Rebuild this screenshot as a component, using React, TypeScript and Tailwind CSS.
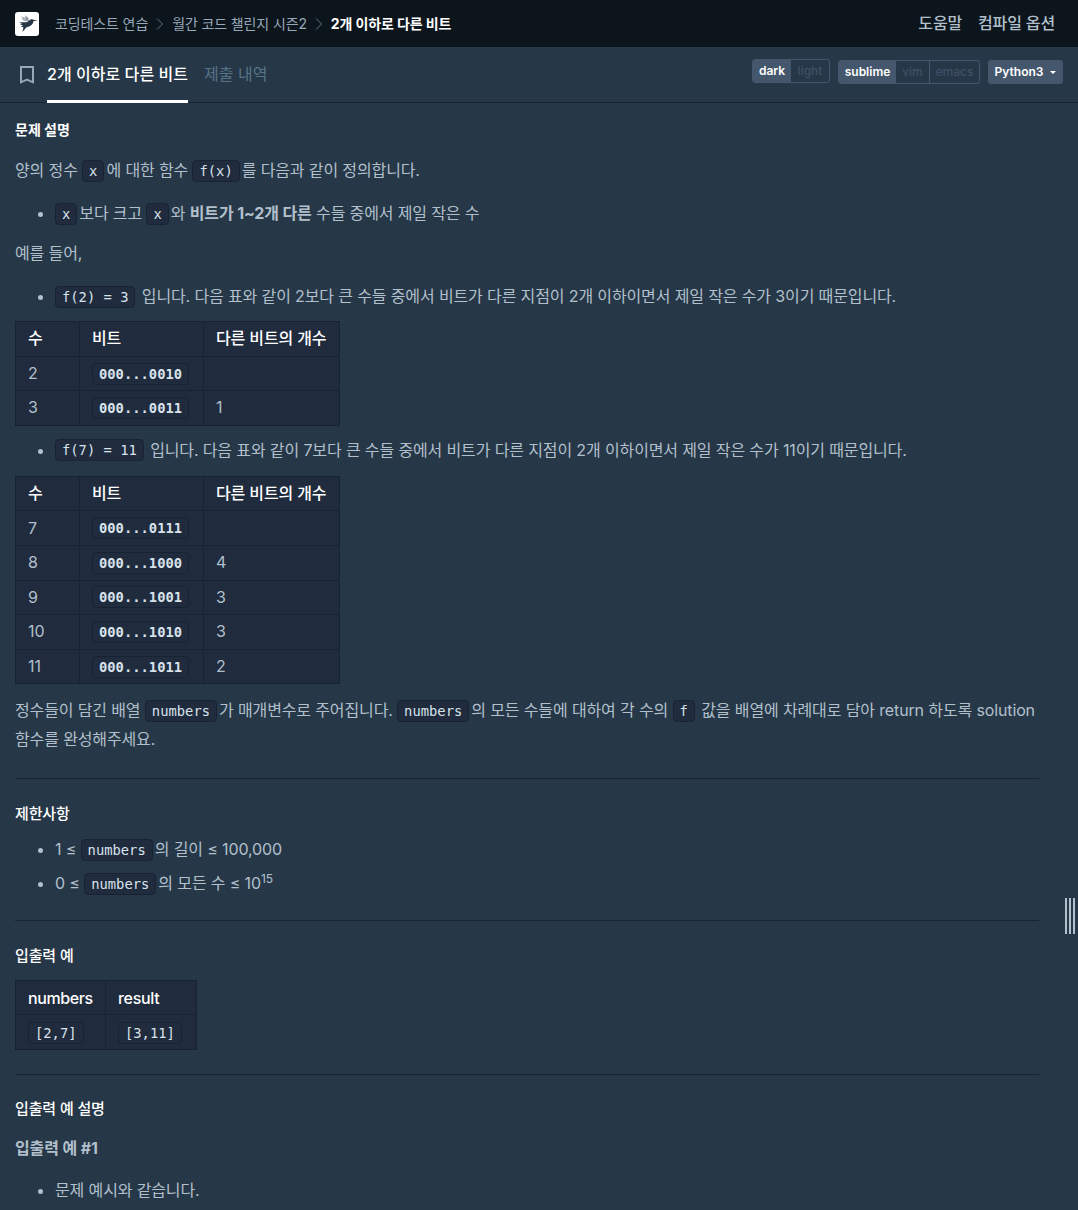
import React from 'react'

const Code = ({ children, className = '' }: { children: React.ReactNode; className?: string }) => (
  <code className={`relative -top-px mr-[2px] inline-block h-[22px] rounded-[4px] border border-[#172334] bg-[#202b3d] px-1.5 align-middle font-['DejaVu_Sans_Mono','Noto_Sans_CJK_KR',monospace] text-[13.8px] leading-[20px] tracking-normal whitespace-pre text-[#d7e2eb] ${className}`}>
    {children}
  </code>
)

const Item = ({ children, className }: { children: React.ReactNode; className: string }) => (
  <ul className={`list-disc pl-10 leading-7 ${className}`}>
    <li>{children}</li>
  </ul>
)

const Heading = ({ children, className }: { children: React.ReactNode; className: string }) => (
  <h6 className={`leading-7 text-white ${className}`}>{children}</h6>
)

const BitTable = ({ rows, className }: { rows: string[][]; className: string }) => (
  <table className={`w-[325px] table-fixed border-collapse bg-[#202b3d] text-left whitespace-nowrap ${className}`}>
    <colgroup>
      <col className="w-16" />
      <col className="w-[124px]" />
      <col />
    </colgroup>
    <thead>
      <tr className="h-[34.6px] text-white">
        {['수', '비트', '다른 비트의 개수'].map((label) => (
          <th key={label} className="border border-[#172334] px-3 pt-0 pb-0.5 leading-7 font-medium">{label}</th>
        ))}
      </tr>
    </thead>
    <tbody>
      {rows.map(([num, bits, diff]) => (
        <tr key={num} className="h-[34.6px]">
          <td className="border border-[#172334] px-3 pt-0 pb-px leading-7">{num}</td>
          <td className="border border-[#172334] px-3 pt-0 pb-px leading-7"><Code className="font-bold">{bits}</Code></td>
          <td className="border border-[#172334] px-3 pt-0 pb-px leading-7">{diff}</td>
        </tr>
      ))}
    </tbody>
  </table>
)

const Chevron = () => (
  <svg className="mx-2 h-3 w-2" viewBox="0 0 8 12" fill="none" stroke="#577487">
    <path d="M1 0.5L6.5 6L1 11.5" />
  </svg>
)

export default function App() {
  return (
    <div className="relative h-[1210px] w-[1078px] overflow-hidden bg-[#263747] font-['Inter','Noto_Sans_CJK_KR',sans-serif] text-base text-[#b2c0cc]">
      <header className="flex h-[47px] items-center bg-[#0c151c] pr-[23px] pl-[15px]">
        <svg className="mr-4 h-6 w-6" viewBox="0 0 24 24">
          <rect width="24" height="24" rx="3" fill="#fff" />
          <path d="M6.3 4.5L10 5.5L13 10L8 8.5Z" fill="#a9b0b9" />
          <path d="M10.2 3L13.3 6L14 9.5L11 8Z" fill="#8b949f" />
          <path d="M4 10.2L12 10.2L15.5 7.6C16.5 6.9 18 7 18.6 7.8L23 8.4L18.6 8.9C18 12.5 15 14.5 11.5 15.2L7.5 20L8.4 15.2L5.8 14.4L8 13.4L5 12.2L7 11.8Z" fill="#263747" />
        </svg>
        <nav className="flex flex-1 items-center text-sm tracking-[-0.12px] text-[#98a8b9]">
          <a>코딩테스트 연습</a>
          <Chevron />
          <a>월간 코드 챌린지 시즌2</a>
          <Chevron />
          <a className="font-bold text-white">2개 이하로 다른 비트</a>
        </nav>
        <div className="relative -top-px flex gap-4 font-medium tracking-[-0.15px]">
          <a>도움말</a>
          <a>컴파일 옵션</a>
        </div>
      </header>

      <div className="flex h-14 border-b border-[#172334] pr-[15px] pl-5">
        <svg className="mt-[19px] mr-[13px] h-[18px] w-3.5" viewBox="0 0 14 18" fill="none" stroke="#98a8b9" strokeWidth="2">
          <path d="M1 1H13V16.3L7 13.7L1 16.3Z" />
        </svg>
        <div className="h-14 w-[141px] border-b-3 border-white leading-[54px] font-medium tracking-[0.05px] whitespace-nowrap text-white">2개 이하로 다른 비트</div>
        <div className="ml-4 flex-1 leading-[54px] text-[#577487]">제출 내역</div>
        <div className="mt-3 flex h-6 overflow-hidden rounded-[3px] border border-[#44576c] text-xs leading-[22px] font-medium text-[#3f5166]">
          <span className="w-[38px] bg-[#44576c] text-center font-semibold text-white">dark</span>
          <span className="w-[38px] text-center">light</span>
        </div>
        <div className="mt-[13px] ml-2 flex h-6 overflow-hidden rounded-[3px] border border-[#44576c] text-xs leading-[22px] font-medium text-[#3f5166]">
          <span className="w-[57px] bg-[#44576c] text-center font-semibold text-white">sublime</span>
          <span className="w-[34px] border-r border-[#44576c] text-center">vim</span>
          <span className="w-[49px] text-center">emacs</span>
        </div>
        <button className="mt-[13px] ml-2 flex h-6 w-[75px] items-center justify-center gap-[7px] rounded-[3px] bg-[#44576c] text-xs font-semibold text-white">
          Python3
          <svg className="h-[3px] w-1.5" viewBox="0 0 6 3" fill="#fff"><path d="M0 0H6L3 3Z" /></svg>
        </button>
      </div>

      <main className="flow-root w-[1054px] px-[15px] tracking-[-0.13px]">
        <Heading className="mt-[13px] text-sm font-bold tracking-normal">문제 설명</Heading>
        <p className="mt-3 h-7 leading-7">양의 정수 <Code>x</Code>에 대한 함수 <Code>f(x)</Code>를 다음과 같이 정의합니다.</p>
        <Item className="mt-[15px] h-7"><Code>x</Code>보다 크고 <Code>x</Code>와 <strong>비트가 1~2개 다른</strong> 수들 중에서 제일 작은 수</Item>
        <p className="mt-3 h-7 leading-7">예를 들어,</p>
        <Item className="mt-[15px] h-7"><Code>f(2) = 3</Code> 입니다. 다음 표와 같이 2보다 큰 수들 중에서 비트가 다른 지점이 2개 이하이면서 제일 작은 수가 3이기 때문입니다.</Item>
        <BitTable className="mt-[11px]" rows={[['2', '000...0010', ''], ['3', '000...0011', '1']]} />
        <Item className="mt-2.5 h-7"><Code>f(7) = 11</Code> 입니다. 다음 표와 같이 7보다 큰 수들 중에서 비트가 다른 지점이 2개 이하이면서 제일 작은 수가 11이기 때문입니다.</Item>
        <BitTable
          className="mt-3"
          rows={[
            ['7', '000...0111', ''],
            ['8', '000...1000', '4'],
            ['9', '000...1001', '3'],
            ['10', '000...1010', '3'],
            ['11', '000...1011', '2'],
          ]}
        />
        <p className="mt-3 h-[58px] leading-[29px]">정수들이 담긴 배열 <Code>numbers</Code>가 매개변수로 주어집니다. <Code>numbers</Code>의 모든 수들에 대하여 각 수의 <Code>f</Code> 값을 배열에 차례대로 담아 return 하도록 solution 함수를 완성해주세요.</p>
        <hr className="mt-6 border-[#172334]" />
        <Heading className="mt-[21px] text-[15px] font-medium">제한사항</Heading>
        <Item className="mt-[7px] h-7">1 ≤ <Code>numbers</Code>의 길이 ≤ 100,000</Item>
        <Item className="mt-1.5 h-7">0 ≤ <Code>numbers</Code>의 모든 수 ≤ 10<sup className="text-xs">15</sup></Item>
        <hr className="mt-[23px] border-[#172334]" />
        <Heading className="mt-[21px] text-[15px] font-medium">입출력 예</Heading>
        <table className="mt-2.5 w-[182px] table-fixed border-collapse bg-[#202b3d] text-left">
          <thead>
            <tr className="h-[34px] text-white">
              <th className="w-[90px] border border-[#172334] px-3 py-0 leading-7 font-medium tracking-[-0.4px]">numbers</th>
              <th className="border border-[#172334] px-3 py-0 leading-7 font-medium tracking-[-0.3px]">result</th>
            </tr>
          </thead>
          <tbody>
            <tr className="h-[34.6px]">
              <td className="border border-[#172334] px-3 py-0 leading-7"><Code>[2,7]</Code></td>
              <td className="border border-[#172334] px-3 py-0 leading-7"><Code>[3,11]</Code></td>
            </tr>
          </tbody>
        </table>
        <hr className="mt-6 border-[#172334]" />
        <Heading className="mt-5 text-[15px] font-medium">입출력 예 설명</Heading>
        <p className="mt-[11px] leading-7 font-bold">입출력 예 #1</p>
        <Item className="mt-3.5">문제 예시와 같습니다.</Item>
      </main>

      {/* Poignée de redimensionnement */}
      <div className="absolute top-[898px] right-[3px] flex gap-0.5">
        <span className="h-9 w-0.5 bg-[#b2c0cc]" />
        <span className="h-9 w-0.5 bg-[#b2c0cc]" />
        <span className="h-9 w-0.5 bg-[#b2c0cc]" />
      </div>
    </div>
  )
}
